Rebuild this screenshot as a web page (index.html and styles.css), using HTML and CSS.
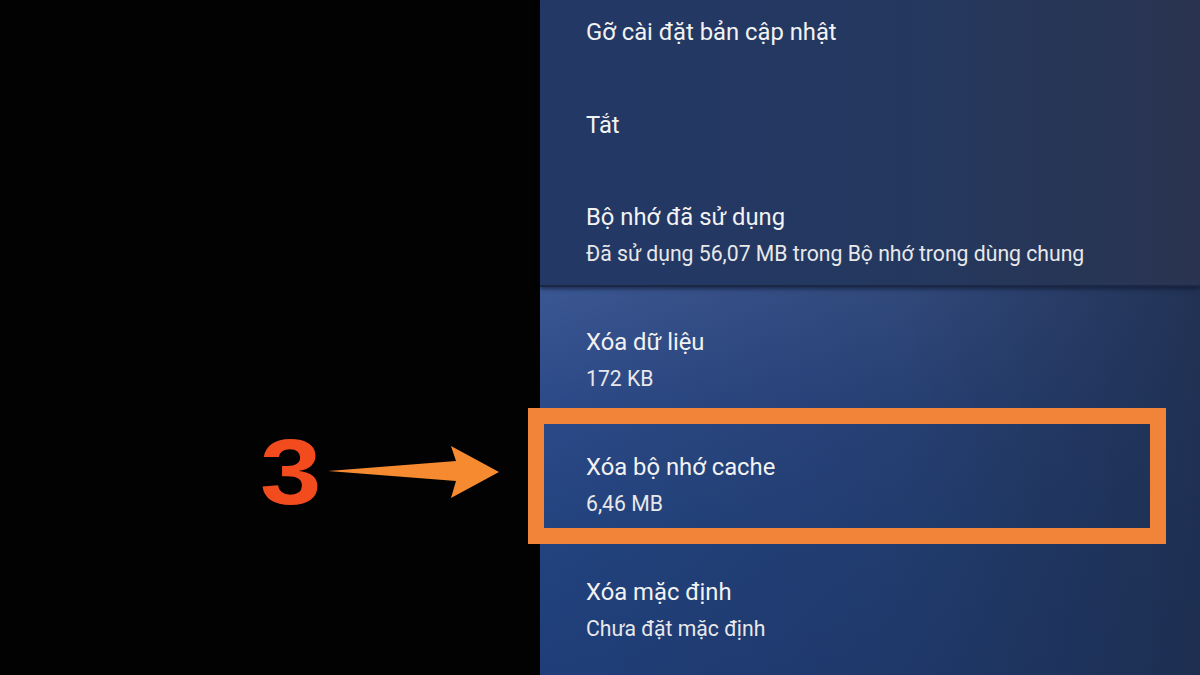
FILE: index.html
```html
<!DOCTYPE html>
<html lang="vi">
<head>
<meta charset="utf-8">
<title>Xóa bộ nhớ cache</title>
<link rel="stylesheet" href="styles.css">
</head>
<body>
<div class="screen">
  <div class="left"></div>
  <div class="panel">
    <div class="top">
      <div class="row single"><div class="title">Gỡ cài đặt bản cập nhật</div></div>
      <div class="row single"><div class="title">Tắt</div></div>
      <div class="row double"><div class="title">Bộ nhớ đã sử dụng</div><div class="sub">Đã sử dụng 56,07 MB trong Bộ nhớ trong dùng chung</div></div>
    </div>
    <div class="bottom">
      <div class="row lower"><div class="title">Xóa dữ liệu</div><div class="sub">172 KB</div></div>
      <div class="row lower"><div class="title">Xóa bộ nhớ cache</div><div class="sub">6,46 MB</div></div>
      <div class="row lower"><div class="title">Xóa mặc định</div><div class="sub">Chưa đặt mặc định</div></div>
    </div>
  </div>
  <div class="highlight"></div>
  <div class="step">3</div>
  <svg class="arrow" width="180" height="60" viewBox="0 0 180 60">
    <path d="M2 30 L130 20 L125 5 L173 31 L125 57 L130 40 Z" fill="#f58a31"/>
  </svg>
</div>
</body>
</html>
```
FILE: styles.css
```css
html, body {
  margin: 0;
  padding: 0;
  background: #000;
}
.screen {
  position: relative;
  width: 1200px;
  height: 675px;
  display: flex;
  overflow: hidden;
  background: #000;
  font-family: Roboto, "Noto Sans", sans-serif;
}
.left {
  width: 540px;
  flex: none;
  background: #020202;
}
.panel {
  width: 660px;
  flex: none;
  display: flex;
  flex-direction: column;
}
.top {
  height: 285px;
  background: linear-gradient(90deg, #233866 0%, #24385f 55%, #2a3450 100%);
  border-bottom: 2px solid #1c2745;
  box-shadow: 0 2px 4px rgba(10, 18, 40, 0.6);
  position: relative;
  z-index: 1;
}
.bottom {
  flex: 1;
  background:
    linear-gradient(90deg, rgba(30, 45, 76, 0) 0%, rgba(30, 45, 76, 0.35) 55%, rgba(29, 44, 74, 0.85) 100%),
    linear-gradient(180deg, #3b5793 0%, #2c4a88 30%, #22437f 65%, #1f3e79 100%);
}
.row {
  box-sizing: border-box;
  padding-left: 46px;
  color: #f2f2f2;
}
.row.single {
  height: 93px;
  padding-top: 17px;
}
.row.double {
  height: 99px;
  padding-top: 16px;
}
.row.lower {
  height: 125px;
  padding-top: 40px;
}
.title {
  font-size: 23.8px;
  line-height: 30px;
}
.sub {
  font-size: 21.2px;
  line-height: 28px;
  margin-top: 8px;
  color: #e8e8ea;
}
.highlight {
  position: absolute;
  left: 528px;
  top: 408px;
  width: 606px;
  height: 104px;
  border: 16px solid #f2843a;
}
.step {
  position: absolute;
  left: 260px;
  top: 422px;
  font-family: "Liberation Sans", Arial, sans-serif;
  font-weight: 700;
  font-size: 92px;
  line-height: 100px;
  color: #f24b1d;
  transform: scaleX(1.2);
  transform-origin: left center;
}
.arrow {
  position: absolute;
  left: 326px;
  top: 441px;
}
```
